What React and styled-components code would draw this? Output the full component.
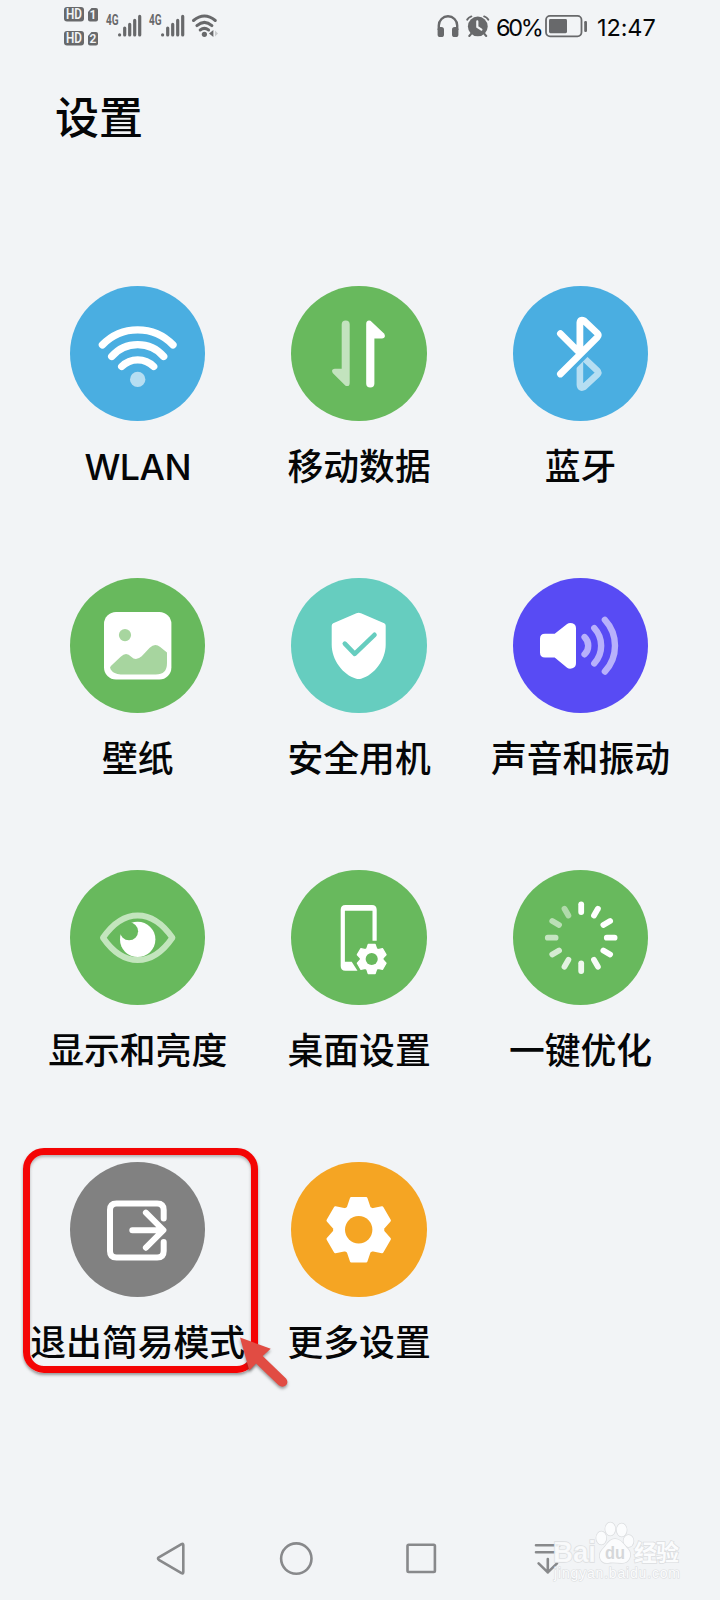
import styled, { createGlobalStyle } from 'styled-components';

const GlobalStyle = createGlobalStyle`
  * {
    box-sizing: border-box;
  }

  body {
    margin: 0;
    background: #f2f4f6;
    color: #050607;
    font-family: Inter, 'Noto Sans CJK SC', sans-serif;
  }

  svg {
    display: block;
    flex: none;
  }
`;

const Screen = styled.div`
  display: flex;
  flex-direction: column;
  width: 720px;
  height: 1600px;
  overflow: hidden;
  background: #f2f4f6;
`;

const StatusBar = styled.header`
  display: flex;
  justify-content: space-between;
  height: 54px;
  padding: 0 62px 0 64px;
`;

const StatusGroup = styled.div`
  display: flex;
  align-items: flex-start;
`;

const StatusText = styled.span`
  width: ${({ $width }) => $width}px;
  margin-left: ${({ $gap }) => $gap}px;
  padding-top: 13px;
  font-size: 23.5px;
  line-height: 30px;
  letter-spacing: ${({ $spacing }) => $spacing}px;
  white-space: nowrap;
`;

const Title = styled.h1`
  margin: 32px 0 0 55px;
  font-size: 44px;
  font-weight: 500;
  line-height: 64px;
`;

const Grid = styled.main`
  display: grid;
  grid-template-columns: repeat(3, 221.4px);
  grid-auto-rows: 292px;
  margin: 136px 0 0 27px;
`;

const Tile = styled.div`
  position: relative;
  display: flex;
  flex-direction: column;
  align-items: center;
`;

const Disc = styled.div`
  width: 135.4px;
  height: 135.4px;
  border-radius: 50%;
  background: ${({ $color }) => $color};
`;

const Label = styled.div`
  margin-top: 20px;
  font-size: 35.8px;
  font-weight: 500;
  line-height: 52px;
  white-space: nowrap;
`;

const LatinLabel = styled(Label)`
  margin-top: 19.6px;
  letter-spacing: -0.5px;
`;

const Highlight = styled.div`
  position: absolute;
  top: -14px;
  left: -4.5px;
  width: 235px;
  height: 225px;
  border: 7px solid #f40404;
  border-radius: 21px;
  box-shadow: 0 2px 3px rgba(60, 60, 60, 0.5), inset 0 2px 3px rgba(60, 60, 60, 0.35);
`;

const Pointer = styled.svg`
  position: absolute;
  top: 172px;
  left: 209px;
  filter: drop-shadow(0 2px 1.5px rgba(60, 60, 60, 0.5));
`;

const NavBar = styled.nav`
  position: relative;
  display: flex;
  align-items: center;
  gap: 85.5px;
  height: 84px;
  margin-top: auto;
  padding: 0 0 0 151px;
`;

const Watermark = styled.svg`
  position: absolute;
  top: 0;
  left: 545px;
`;

const GREY = '#68696b';
const GREEN = '#68b95d';
const BLUE = '#4aaee1';

// One tooth of the cog, turned six times around the origin
const tooth = [[-10.6, -21.8], [-7.4, -31.3], [7.4, -31.3], [10.6, -21.8]];
const cogPoints = [0, 60, 120, 180, 240, 300]
  .flatMap(deg => {
    const a = (deg * Math.PI) / 180;
    return tooth.map(([x, y]) => [
      x * Math.cos(a) - y * Math.sin(a),
      x * Math.sin(a) + y * Math.cos(a)
    ]);
  })
  .map(([x, y]) => `${x.toFixed(2)},${y.toFixed(2)}`)
  .join(' ');

const Cog = ({ hole, holeRadius = 13.7 }) => (
  <>
    <polygon points={cogPoints} fill="#fff" stroke="#fff" strokeWidth="2.8" strokeLinejoin="round" />
    <circle r={holeRadius} fill={hole} />
  </>
);

const WlanIcon = () => (
  <>
    <g fill="none" stroke="#fff" strokeWidth="7.3" strokeLinecap="round">
      <path d="M-35.3-8.8A49 49 0 0 1 35.3-8.8" />
      <path d="M-26 2.8A34.5 34.5 0 0 1 26 2.8" />
      <path d="M-16 12.8A22.5 22.5 0 0 1 16 12.8" />
    </g>
    <circle cy="25.7" r="7.7" fill="#b6def2" />
  </>
);

const DataIcon = () => (
  <>
    <path
      d="M-17-29.2a4 4 0 0 1 8 0V29q0 4.6-4.2 3L-26 19.4Q-28 15.3-24 15H-17Z"
      fill="#c3e3be"
    />
    <path
      d="M7.5-29.6Q7.5-34 11.8-33L25.6-20Q27.6-15.6 23.4-15.3H15.7V29.7a4.1 4.1 0 0 1-8.2 0Z"
      fill="#fff"
    />
  </>
);

const BluetoothIcon = () => (
  <>
    <defs>
      <clipPath id="lowerHalf">
        <path d="M-16 26L30-20V50H-16Z" />
      </clipPath>
    </defs>
    <path
      d="M-.8-2V31Q-.5 35.3 3.4 33.2L16.5 21Q18.5 19 16.5 16.9L-2-.5"
      fill="none"
      stroke="#b6def2"
      strokeWidth="6.6"
      clipPath="url(#lowerHalf)"
    />
    <path
      d="M-20.3 20.3L16.5-16.4Q18.5-18.5 16.5-20.6L3.4-33Q-.5-35-.8-31V-.5L-20.3-20"
      fill="none"
      stroke="#fff"
      strokeWidth="6.8"
      strokeLinecap="round"
      strokeLinejoin="round"
    />
  </>
);

const WallpaperIcon = () => (
  <>
    <rect x="-33.7" y="-33.7" width="67.4" height="67.4" rx="12" fill="#fff" />
    <g fill="#a7d59f">
      <circle cx="-12.7" cy="-10.6" r="6.1" />
      <path d="M-26.8 20.3L-17 11Q-11.5 5.6-6.5 11Q-1.8 15.6 4 10.5L12 2Q17.3-3 22.5 1.3L29.3 6.8V17.5Q29.3 28.8 18 28.8H-17Q-24 28.3-27 23.7Q-28.4 21.8-26.8 20.3Z" />
    </g>
  </>
);

const ShieldIcon = () => (
  <>
    <path
      d="M-2.3-32.4Q0-33.7 2.3-32.4L25.5-22.5Q27-21.8 27-20V-1C27 14 16 29 2.4 33Q0 33.7-2.4 33C-16 29-27 14-27-1V-20Q-27-21.8-25.5-22.5Z"
      fill="#fff"
    />
    <path
      d="M-13.9-2.1L-4 8.2L15.8-10.9"
      fill="none"
      stroke="#66cdbf"
      strokeWidth="4.6"
      strokeLinecap="round"
      strokeLinejoin="round"
    />
  </>
);

const SoundIcon = () => (
  <>
    <path
      d="M-40.7-7Q-40.7-12-35.7-12H-26L-13.6-21.8Q-11.5-23.3-8.3-22.4Q-4.7-21.2-4.7-17.5V17.5Q-4.7 21.2-8.3 22.6Q-11.5 23.6-13.6 22L-26 11.8H-35.7Q-40.7 11.8-40.7 6.8Z"
      fill="#fff"
    />
    <g fill="none" stroke="#b8b1fb" strokeWidth="6.4" strokeLinecap="round">
      <path d="M3.9-8.6A12 12 0 0 1 3.9 8.6" />
      <path d="M13.6-17.6A26 26 0 0 1 13.6 17.6" />
      <path d="M24.2-25.8A38 38 0 0 1 24.2 25.8" />
    </g>
  </>
);

const EyeIcon = () => (
  <>
    <circle cy="1.7" r="17.7" fill="#fff" />
    <circle cx="-8.6" cy="-6.4" r="9" fill={GREEN} />
    <path
      d="M-34.7 0C-25-14-13-22.3 0-22.3S25-14 34.7 0C25 14 13 22.3 0 22.3S-25 14-34.7 0Z"
      fill="none"
      stroke="#c3e5bd"
      strokeWidth="6"
      strokeLinejoin="round"
    />
  </>
);

const DesktopIcon = () => (
  <>
    <path
      d="M-18-28Q-18-32.7-13.3-32.7H13.3Q18-32.7 18-28V3H13.8V-27H-13.8V24H-7L-1.2 33H-13.3Q-18 33-18 28.3Z"
      fill="#fff"
    />
    <g transform="translate(13 21.3) scale(.465)">
      <Cog hole={GREEN} holeRadius={13} />
    </g>
  </>
);

const spokes = [1, 1, 1, 1, 1, 0.95, 0.9, 0.82, 0.72, 0.62, 0.55, 0.48];

const OptimizeIcon = () => (
  <g stroke="#fff" strokeWidth="5.8" strokeLinecap="round" transform="translate(.5 0)">
    {spokes.map((opacity, i) => (
      <line key={i} y1="-33.4" y2="-25.6" opacity={opacity} transform={`rotate(${i * 30})`} />
    ))}
  </g>
);

const ExitIcon = () => (
  <g fill="none" stroke="#fff" strokeWidth="6" strokeLinecap="round" strokeLinejoin="round">
    <path d="M26-11.2V-19.8Q26-26.3 19.5-26.3H-21.2Q-27.7-26.3-27.7-19.8V21.2Q-27.7 27.7-21.2 27.7H19.5Q26 27.7 26 21.2V12.4" />
    <path d="M-5.4.5H25M8.2-17L25.7.5L8.2 18" />
  </g>
);

const MoreIcon = () => <Cog hole="#f5a523" />;

const items = [
  { label: 'WLAN', color: BLUE, Icon: WlanIcon, latin: true },
  { label: '移动数据', color: GREEN, Icon: DataIcon },
  { label: '蓝牙', color: BLUE, Icon: BluetoothIcon },
  { label: '壁纸', color: GREEN, Icon: WallpaperIcon },
  { label: '安全用机', color: '#66cdbf', Icon: ShieldIcon },
  { label: '声音和振动', color: '#584bf4', Icon: SoundIcon },
  { label: '显示和亮度', color: GREEN, Icon: EyeIcon },
  { label: '桌面设置', color: GREEN, Icon: DesktopIcon },
  { label: '一键优化', color: GREEN, Icon: OptimizeIcon },
  { label: '退出简易模式', color: '#818181', Icon: ExitIcon, marked: true },
  { label: '更多设置', color: '#f5a523', Icon: MoreIcon }
];

const HdBadges = () => (
  <svg width="36" height="54" fontFamily="Roboto, sans-serif" fontWeight="600" fontSize="14">
    {[1, 2].map((n, i) => (
      <g key={n} transform={`translate(0 ${7 + i * 24})`}>
        <rect width="20" height="14.4" rx="3" fill={GREY} />
        <text x="2" y="12.2" fill="#f2f4f6" textLength="16" lengthAdjust="spacingAndGlyphs">HD</text>
        <path d="M24 5L27.5 1H32Q34 1 34 3V12.4Q34 14.4 32 14.4H26Q24 14.4 24 12.4Z" fill={GREY} />
        <text x="29" y="12.2" fill="#f2f4f6" textAnchor="middle" fontSize="12">{n}</text>
      </g>
    ))}
  </svg>
);

const Signal = () => (
  <svg width="43.3" height="54">
    <text
      x="6"
      y="24.8"
      fill={GREY}
      fontFamily="Roboto, sans-serif"
      fontSize="14"
      fontWeight="700"
      textLength="12.6"
      lengthAdjust="spacingAndGlyphs"
    >
      4G
    </text>
    <g stroke={GREY} strokeWidth="3.2" strokeLinecap="round">
      <path d="M19.6 34.8V35M24.7 28V35M29.7 24.4V35M34.7 20.4V35M39.7 16.4V35" />
    </g>
  </svg>
);

const StatusWifi = () => (
  <svg width="28" height="54" viewBox="0 0 28 54">
    <g fill="none" stroke={GREY} strokeWidth="3" strokeLinecap="round">
      <path d="M2.5 20.5Q13.4 11.5 24.3 20.5" />
      <path d="M5.9 25.6Q13.4 19.2 20.9 25.6" />
      <path d="M9.2 30Q13.4 26.8 17.6 30" />
    </g>
    <circle cx="13.4" cy="34.3" r="2.6" fill={GREY} />
    <path d="M18 33.5L22.4 30V37Z" fill={GREY} />
    <path d="M27 33.5L24 30.6V36.4Z" fill="#c9cbcd" />
  </svg>
);

const Headphones = () => (
  <svg width="22" height="54" viewBox="0 0 22 54">
    <path d="M1.8 30V25.5A9.2 9.2 0 0 1 20.2 25.5V30" fill="none" stroke={GREY} strokeWidth="2.4" />
    <rect x=".6" y="27" width="6.4" height="10" rx="2.6" fill={GREY} />
    <rect x="15" y="27" width="6.4" height="10" rx="2.6" fill={GREY} />
  </svg>
);

const Alarm = () => (
  <svg width="24" height="54" viewBox="0 0 24 54">
    <g stroke={GREY} strokeWidth="2" strokeLinecap="round" fill="none">
      <path d="M1.3 19.6Q2.6 17.2 5.3 16.4M18.2 16.4Q20.9 17.2 22.2 19.6M5 34L3.3 36M18.5 34L20.2 36" />
    </g>
    <circle cx="11.8" cy="26.4" r="9.9" fill={GREY} />
    <path d="M11.3 21.4V26.8L15.4 29.6" fill="none" stroke="#f2f4f6" strokeWidth="2.2" strokeLinecap="round" />
  </svg>
);

const Battery = () => (
  <svg width="43" height="54" viewBox="0 0 43 54">
    <rect x="1" y="15.9" width="35.5" height="20.4" rx="4" fill="none" stroke={GREY} strokeWidth="1.8" />
    <rect x="4" y="19" width="18" height="14.2" rx="1.4" fill={GREY} />
    <rect x="39.2" y="21" width="2.8" height="11" rx="1.2" fill={GREY} />
  </svg>
);

const NavIcon = ({ children }) => (
  <svg
    width="40"
    height="40"
    viewBox="0 0 40 40"
    fill="none"
    stroke="#88898b"
    strokeWidth="2.6"
    strokeLinecap="round"
    strokeLinejoin="round"
  >
    {children}
  </svg>
);

const Brand = () => (
  <Watermark width="150" height="84" viewBox="0 0 150 84" fill="#fbfcfd" stroke="#dcdee0" paintOrder="stroke">
    <g strokeWidth="1.5" fontWeight="700" fontFamily="'Liberation Sans', 'Noto Sans CJK SC', sans-serif">
      <text x="8" y="45.5" fontSize="29" textLength="43" lengthAdjust="spacingAndGlyphs" fillOpacity="0.85">Bai</text>
      <ellipse cx="56.3" cy="22" rx="5" ry="6.5" />
      <ellipse cx="65.3" cy="13" rx="5" ry="6.5" />
      <ellipse cx="76.7" cy="14" rx="5" ry="6.5" />
      <ellipse cx="83.5" cy="25" rx="5" ry="6" />
      <path d="M70 23C76 23 79 29 83 33C88 39 84 47 77 47C72 47 68 46 63 47C56 48 52 40 57 34C62 29 64 23 70 23Z" />
      <text x="60" y="43" fontSize="19" fill="#d5d7d9" stroke="none" textLength="20" lengthAdjust="spacingAndGlyphs">du</text>
      <text x="89" y="45" fontSize="23" textLength="45">经验</text>
    </g>
    <text x="9" y="62" fontSize="14" strokeWidth="1.2" fontFamily="'Liberation Sans', sans-serif" textLength="126">
      jingyan.baidu.com
    </text>
  </Watermark>
);

const App = () => (
  <>
    <GlobalStyle />
    <Screen>
      <StatusBar>
        <StatusGroup>
          <HdBadges />
          <Signal />
          <Signal />
          <svg width="4.5" height="1" />
          <StatusWifi />
        </StatusGroup>
        <StatusGroup>
          <Headphones />
          <svg width="7" height="1" />
          <Alarm />
          <StatusText $width={49} $gap={6} $spacing={-2.3}>60%</StatusText>
          <Battery />
          <StatusText $width={61} $gap={9} $spacing={-0.1}>12:47</StatusText>
        </StatusGroup>
      </StatusBar>

      <Title>设置</Title>

      <Grid>
        {items.map(({ label, color, Icon, latin, marked }) => (
          <Tile key={label}>
            <Disc $color={color}>
              <svg width="135.4" height="135.4" viewBox="-67.7 -67.7 135.4 135.4">
                <Icon />
              </svg>
            </Disc>
            {latin ? <LatinLabel>{label}</LatinLabel> : <Label>{label}</Label>}
            {marked && (
              <>
                <Highlight />
                <Pointer width="56" height="56" viewBox="0 0 56 56">
                  <path
                    d="M4 3.5L34.7 14.8L26.7 22L50 44.5Q52.8 48 50 51.3Q46.5 54 42.7 51.3L20 29.5L13.3 36.5Z"
                    fill="#e14c43"
                  />
                </Pointer>
              </>
            )}
          </Tile>
        ))}
      </Grid>

      <NavBar>
        <NavIcon>
          <path d="M7.8 19.4L30.5 6.1Q32.3 5.2 32.3 7.1V34.1Q32.3 36 30.5 35.1L7.8 21.8Q6.2 20.6 7.8 19.4Z" />
        </NavIcon>
        <NavIcon>
          <circle cx="19.3" cy="20.6" r="15.2" />
        </NavIcon>
        <NavIcon>
          <rect x="5.5" y="6.8" width="27.4" height="27.2" rx="1.2" />
        </NavIcon>
        <NavIcon>
          <path d="M8 7.2H31.5M8 14.2H27M19.8 21V34.4M10.6 25.4L19.8 34.4L29 25.4" />
        </NavIcon>
        <Brand />
      </NavBar>
    </Screen>
  </>
);

export default App;
